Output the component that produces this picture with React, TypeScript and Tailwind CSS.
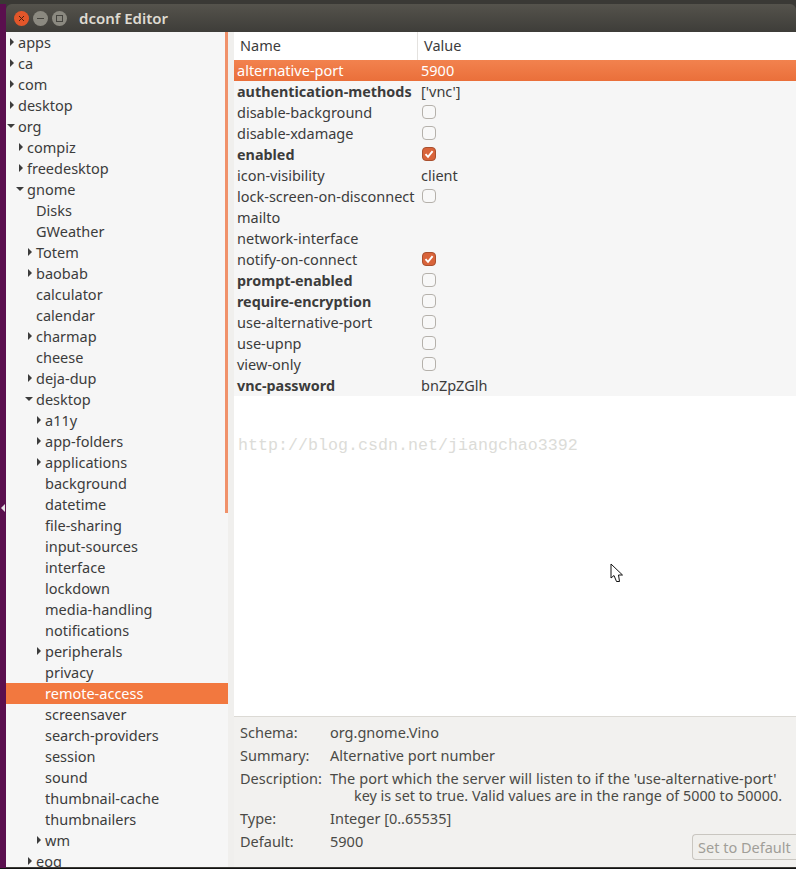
import React from "react";

type Node = { t: string; d: number; a?: "r" | "d"; sel?: boolean };

const tree: Node[] = [
  { t: "apps", d: 0, a: "r" },
  { t: "ca", d: 0, a: "r" },
  { t: "com", d: 0, a: "r" },
  { t: "desktop", d: 0, a: "r" },
  { t: "org", d: 0, a: "d" },
  { t: "compiz", d: 1, a: "r" },
  { t: "freedesktop", d: 1, a: "r" },
  { t: "gnome", d: 1, a: "d" },
  { t: "Disks", d: 2 },
  { t: "GWeather", d: 2 },
  { t: "Totem", d: 2, a: "r" },
  { t: "baobab", d: 2, a: "r" },
  { t: "calculator", d: 2 },
  { t: "calendar", d: 2 },
  { t: "charmap", d: 2, a: "r" },
  { t: "cheese", d: 2 },
  { t: "deja-dup", d: 2, a: "r" },
  { t: "desktop", d: 2, a: "d" },
  { t: "a11y", d: 3, a: "r" },
  { t: "app-folders", d: 3, a: "r" },
  { t: "applications", d: 3, a: "r" },
  { t: "background", d: 3 },
  { t: "datetime", d: 3 },
  { t: "file-sharing", d: 3 },
  { t: "input-sources", d: 3 },
  { t: "interface", d: 3 },
  { t: "lockdown", d: 3 },
  { t: "media-handling", d: 3 },
  { t: "notifications", d: 3 },
  { t: "peripherals", d: 3, a: "r" },
  { t: "privacy", d: 3 },
  { t: "remote-access", d: 3, sel: true },
  { t: "screensaver", d: 3 },
  { t: "search-providers", d: 3 },
  { t: "session", d: 3 },
  { t: "sound", d: 3 },
  { t: "thumbnail-cache", d: 3 },
  { t: "thumbnailers", d: 3 },
  { t: "wm", d: 3, a: "r" },
  { t: "eog", d: 2, a: "r" },
];

type Row = { n: string; b?: boolean; v?: string; c?: boolean; sel?: boolean };

const rows: Row[] = [
  { n: "alternative-port", v: "5900", sel: true },
  { n: "authentication-methods", b: true, v: "['vnc']" },
  { n: "disable-background", c: false },
  { n: "disable-xdamage", c: false },
  { n: "enabled", b: true, c: true },
  { n: "icon-visibility", v: "client" },
  { n: "lock-screen-on-disconnect", c: false },
  { n: "mailto" },
  { n: "network-interface" },
  { n: "notify-on-connect", c: true },
  { n: "prompt-enabled", b: true, c: false },
  { n: "require-encryption", b: true, c: false },
  { n: "use-alternative-port", c: false },
  { n: "use-upnp", c: false },
  { n: "view-only", c: false },
  { n: "vnc-password", b: true, v: "bnZpZGlh" },
];

const indent = ["pl-[3px]", "pl-[12px]", "pl-[21px]", "pl-[30px]"];

function Arrow({ a }: { a?: "r" | "d" }) {
  if (!a) return <span className="w-[6px] shrink-0" />;
  return (
    <svg width="6" height="8" viewBox="0 0 6 8" className="shrink-0 -mt-[2px] overflow-visible">
      {a === "r" ? (
        <path d="M1 0 L5 4 L1 8 Z" fill="#3c3c3c" />
      ) : (
        <path d="M-2 2 L6 2 L2 6 Z" fill="#3c3c3c" />
      )}
    </svg>
  );
}

function Check({ on }: { on: boolean }) {
  if (on) {
    return (
      <span className="w-[14px] h-[14px] ml-[1px] -mt-[1px] rounded-[4px] bg-[#d9643a] border border-[#a9502f] flex items-center justify-center">
        <svg width="10" height="10" viewBox="0 0 10 10">
          <path d="M1.5 5.2 L4 7.8 L8.6 2.2" fill="none" stroke="#ffffff" strokeWidth="1.9" />
        </svg>
      </span>
    );
  }
  return <span className="w-[14px] h-[14px] ml-[1px] -mt-[1px] rounded-[4px] bg-[#f8f8f8] border border-[#b5b1ab]" />;
}

export default function App() {
  return (
    <div
      className="w-[796px] h-[869px] overflow-hidden flex flex-col bg-[#3b3a36] text-[14.5px] text-[#3c3c3c]"
      style={{ fontFamily: '"Noto Sans", "Open Sans", sans-serif' }}
    >
      <div className="h-[4px] shrink-0 bg-[#3a3935]" />
      <div className="flex-1 flex min-h-0">
        <div className="w-[6px] shrink-0 bg-[#5a0f4e] flex items-center">
          <svg width="6" height="10" viewBox="0 0 6 10" className="mt-[144px]">
            <path d="M5 1 L1 5 L5 9 Z" fill="#e8e2e6" />
          </svg>
        </div>
        <div className="flex-1 flex flex-col min-w-0">
          <div className="h-[28px] shrink-0 rounded-t-[6px] bg-gradient-to-b from-[#55534c] to-[#3e3d39] flex items-center pl-[8px]">
            <div className="flex items-center gap-[4px]">
              <span className="w-[15px] h-[15px] rounded-full bg-[#e2562a] flex items-center justify-center">
                <svg width="7" height="7" viewBox="0 0 7 7">
                  <path d="M1 1 L6 6 M6 1 L1 6" stroke="#4a2010" strokeWidth="1" />
                </svg>
              </span>
              <span className="w-[15px] h-[15px] rounded-full bg-[#8b8980] flex items-center justify-center">
                <span className="w-[7px] h-[1px] bg-[#45443f]" />
              </span>
              <span className="w-[15px] h-[15px] rounded-full bg-[#8b8980] flex items-center justify-center">
                <span className="w-[7px] h-[7px] border border-[#45443f]" />
              </span>
            </div>
            <span className="ml-[12px] pt-[1px] text-[15px] font-semibold text-[#dfdbd2]">dconf Editor</span>
          </div>
          <div className="flex-1 flex min-h-0 mb-[1px]">
            <div className="relative w-[222px] shrink-0 bg-[#f6f6f6] overflow-hidden">
              {tree.map((n, i) => (
                <div
                  key={i}
                  className={`h-[21px] flex items-center gap-[3px] ${indent[n.d]} ${
                    n.sel ? "bg-[#f2783f] text-white" : ""
                  }`}
                >
                  <Arrow a={n.a} />
                  <span className="leading-[21px] whitespace-nowrap">{n.t}</span>
                </div>
              ))}
              <div className="absolute right-0 top-0 w-[3px] h-[481px] bg-[#f0916a]" />
            </div>
            <div className="w-[6px] shrink-0 bg-[#f0efed]" />
            <div className="flex-1 min-w-0 flex flex-col bg-white">
              <div className="h-[28px] shrink-0 flex items-center bg-white">
                <span className="w-[184px] pl-[6px] h-full flex items-center border-r border-[#e4e2df]">Name</span>
                <span className="pl-[6px]">Value</span>
              </div>
              <div className="shrink-0 bg-[#f6f6f6]">
                {rows.map((r) => (
                  <div
                    key={r.n}
                    className={`h-[21px] flex items-center ${
                      r.sel ? "bg-gradient-to-b from-[#f2824e] to-[#ea6f3a] text-white" : ""
                    }`}
                  >
                    <span className={`w-[187px] pl-[3px] shrink-0 whitespace-nowrap ${r.b ? "font-bold text-[14.35px]" : ""}`}>{r.n}</span>
                    {r.c !== undefined ? <Check on={r.c} /> : <span>{r.v}</span>}
                  </div>
                ))}
              </div>
              <div className="relative flex-1 min-h-0 bg-white">
                <div
                  className="pt-[39px] pl-[4px] text-[16.67px] leading-[22px] text-[#dcdcd8]"
                  style={{ fontFamily: '"Liberation Mono", monospace' }}
                >
                  http://blog.csdn.net/jiangchao3392
                </div>
                <svg width="14" height="20" viewBox="0 0 14 20" className="absolute left-[376px] top-[167px]">
                  <path
                    d="M1 1 L1 15 L4 12.5 L6.5 18.5 L9.5 18.5 L8.5 12 L12.5 12 Z"
                    fill="#ffffff"
                    stroke="#111111"
                    strokeWidth="1"
                  />
                </svg>
              </div>
              <div className="h-[151px] shrink-0 bg-[#f2f1ef] border-t border-[#dcdad5] relative text-[14.5px] leading-[17px] text-[#4a4a46]">
                <div className="pl-[6px] pt-[4px]">
                  <div className="flex h-[23px] items-center"><span className="w-[90px]">Schema:</span><span>org.gnome.Vino</span></div>
                  <div className="flex h-[23px] items-center"><span className="w-[90px]">Summary:</span><span>Alternative port number</span></div>
                  <div className="flex h-[20px] pt-[3px]"><span className="w-[90px]">Description:</span><span className="whitespace-nowrap tracking-[0.05px]">The port which the server will listen to if the 'use-alternative-port'</span></div>
                  <div className="h-[17px] pl-[114px] whitespace-nowrap text-[14.35px]">key is set to true. Valid values are in the range of 5000 to 50000.</div>
                  <div className="flex h-[23px] items-center mt-[3px]"><span className="w-[90px]">Type:</span><span>Integer [0..65535]</span></div>
                  <div className="flex h-[23px] items-center"><span className="w-[90px]">Default:</span><span>5900</span></div>
                </div>
                <button className="absolute right-0 top-[117px] w-[104px] h-[26px] rounded-l-[4px] border border-r-0 border-[#c9c6c0] bg-[#f0efec] text-[#a09e98] text-left pl-[5px] pt-[1px]">
                  Set to Default
                </button>
              </div>
            </div>
          </div>
        </div>
      </div>
      <div className="h-[1px] shrink-0 bg-[#111111]" />
    </div>
  );
}
